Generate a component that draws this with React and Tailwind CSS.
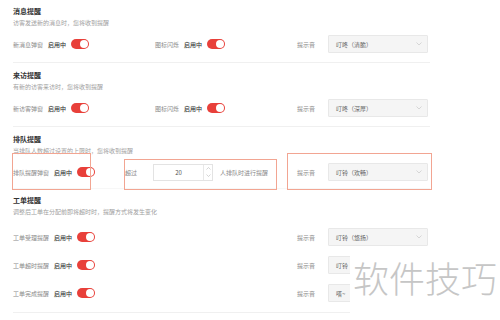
function Toggle() {
  return (
    <div className="w-[18px] h-[10px] rounded-full bg-[#e8403a] flex items-center justify-end pr-[1px]">
      <div className="w-[8px] h-[8px] rounded-full bg-white"></div>
    </div>
  )
}

function Switch({ label }) {
  return (
    <div className="flex items-center">
      <span className="text-[#8a8a8a]">{label}</span>
      <span className="ml-[5px] mr-[5px] text-[#333] font-medium">启用中</span>
      <Toggle />
    </div>
  )
}

function Chevron() {
  return (
    <svg width="6" height="4" viewBox="0 0 6 4" className="text-[#c8c8c8]">
      <path d="M0.5 0.5 L3 3 L5.5 0.5" fill="none" stroke="currentColor" strokeWidth="0.7" />
    </svg>
  )
}

function Sound({ value, cut }) {
  return (
    <div className="flex items-center">
      <span className="text-[#8a8a8a] w-[31px]">提示音</span>
      <div className="w-[100px] h-[18px] bg-[#f5f5f5] border border-[#e8e8e8] rounded-[1px] flex items-center justify-between pl-[7px] pr-[5px]">
        <span className="text-[#666]">{value}</span>
        {!cut && <Chevron />}
      </div>
    </div>
  )
}

function Head({ title, sub }) {
  return (
    <>
      <div className="h-[12px] leading-[12px] text-[7px] font-bold text-[#333]">{title}</div>
      <div className="h-[12px] leading-[12px] text-[#a0a0a0]">{sub}</div>
    </>
  )
}

export default function App() {
  return (
    <div
      className="relative w-[500px] h-[320px] overflow-hidden bg-white text-[6px]"
      style={{ fontFamily: '"Noto Sans CJK SC", "Noto Sans", sans-serif' }}
    >
      <div className="pl-[13px] w-[430px]">
        <div className="pt-[5px] pb-[9px] border-b border-[#f0f0f0]">
          <Head title="消息提醒" sub="访客发送新的消息时，您将收到提醒" />
          <div className="mt-[6px] h-[18px] flex items-center">
            <div className="w-[142px]"><Switch label="新消息弹窗" /></div>
            <div className="w-[142px]"><Switch label="图标闪烁" /></div>
            <Sound value="叮咚（清脆）" />
          </div>
        </div>

        <div className="pt-[6px] pb-[9px] border-b border-[#f0f0f0]">
          <Head title="来访提醒" sub="有新的访客来访时，您将收到提醒" />
          <div className="mt-[6px] h-[18px] flex items-center">
            <div className="w-[142px]"><Switch label="新访客弹窗" /></div>
            <div className="w-[142px]"><Switch label="图标闪烁" /></div>
            <Sound value="叮咚（深厚）" />
          </div>
        </div>

        <div className="pt-[6px] pb-[7px] border-b border-[#f7f7f7]">
          <Head title="排队提醒" sub="当排队人数超过设置的上限时，您将收到提醒" />
          <div className="mt-[6px] h-[18px] flex items-center">
            <div className="w-[112px]"><Switch label="排队提醒弹窗" /></div>
            <div className="w-[172px] flex items-center">
              <span className="text-[#8a8a8a] w-[28px]">超过</span>
              <div className="w-[60px] h-[17px] bg-white border border-[#e3e3e3] flex">
                <div className="flex-1 flex items-center justify-center text-[#555]">20</div>
                <div className="w-[9px] border-l border-[#e8e8e8] flex flex-col items-center justify-around py-[1px]">
                  <svg width="5" height="3" viewBox="0 0 5 3"><path d="M0.5 2.5 L2.5 0.5 L4.5 2.5" fill="none" stroke="#bbb" strokeWidth="0.6" /></svg>
                  <svg width="5" height="3" viewBox="0 0 5 3"><path d="M0.5 0.5 L2.5 2.5 L4.5 0.5" fill="none" stroke="#bbb" strokeWidth="0.6" /></svg>
                </div>
              </div>
              <span className="ml-[7px] text-[#8a8a8a]">人排队时进行提醒</span>
            </div>
            <Sound value="叮铃（欢畅）" />
          </div>
        </div>

        <div className="pt-[5px] pb-[10px] border-b border-[#f0f0f0]">
          <Head title="工单提醒" sub="调整后工单在分配前即将超时时，提醒方式将发生变化" />
          <div className="mt-[10px] flex flex-col gap-[10px]">
            {[
              ["工单受理提醒", "叮铃（悠扬）", false],
              ["工单超时提醒", "叮铃", true],
              ["工单完成提醒", "嗒~", true],
            ].map(([label, sound, cut]) => (
              <div key={label} className="h-[18px] flex items-center">
                <div className="w-[284px]"><Switch label={label} /></div>
                <Sound value={sound} cut={cut} />
              </div>
            ))}
          </div>
        </div>
      </div>

      {/* annotation boxes */}
      <div className="absolute left-[12px] top-[153px] w-[79px] h-[37px] border-[1.5px] border-[#f2a592]"></div>
      <div className="absolute left-[124px] top-[159px] w-[153px] h-[31px] border-[1.5px] border-[#f2a592]"></div>
      <div className="absolute left-[287px] top-[153px] w-[145px] h-[37px] border-[1.5px] border-[#f2a592]"></div>

      {/* watermark */}
      <div className="absolute left-[350px] top-[255px] w-[150px] h-[65px] bg-white flex items-start justify-center">
        <span className="text-[36px] leading-[44px] font-light text-[#c6c6c6]">软件技巧</span>
      </div>
    </div>
  )
}
